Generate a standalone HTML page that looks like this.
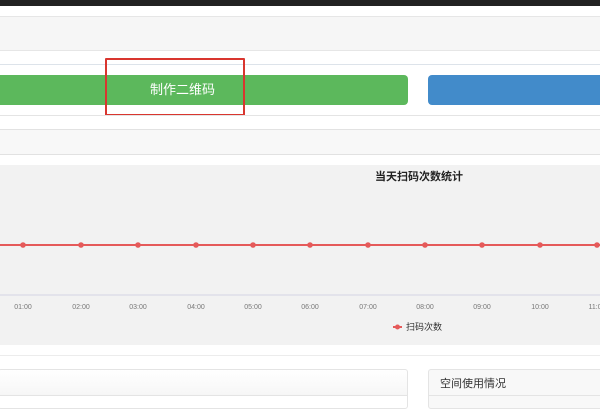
<!DOCTYPE html>
<html><head><meta charset="utf-8"><style>
*{margin:0;padding:0;box-sizing:border-box}
body{width:600px;height:400px;overflow:hidden;background:#fff;position:relative;font-family:"Liberation Sans","Noto Sans CJK SC",sans-serif}
.a{position:absolute}
</style></head><body>
<div class="a" style="left:0;top:0;width:600px;height:6px;background:#222"></div>
<div class="a" style="left:0;top:16px;width:600px;height:35px;background:#f6f6f6;border-top:1px solid #e6e6e6;border-bottom:1px solid #e6e6e6"></div>
<div class="a" style="left:0;top:64px;width:600px;height:1px;background:#dde3ea"></div>
<div class="a" style="left:-5px;top:75px;width:413px;height:30px;background:#5cb85c;border-radius:4px;color:#fff;font-size:13px;line-height:30px;padding-left:155px">制作二维码</div>
<div class="a" style="left:428px;top:75px;width:180px;height:30px;background:#428bca;border-radius:4px"></div>
<div class="a" style="left:105px;top:58px;width:140px;height:58px;border:2px solid #d9362f;border-radius:1px"></div>
<div class="a" style="left:0;top:115px;width:600px;height:1px;background:#e4e4e4"></div>
<div class="a" style="left:0;top:129px;width:600px;height:26px;background:#f8f8f8;border-top:1px solid #e2e2e2;border-bottom:1px solid #e2e2e2"></div>
<div class="a" style="left:0;top:165px;width:600px;height:180px;background:#f2f2f2"></div>
<svg class="a" style="left:0;top:165px" width="600" height="180">
<text x="375" y="15" font-size="11" font-weight="bold" fill="#222" font-family="Liberation Sans,Noto Sans CJK SC,sans-serif">当天扫码次数统计</text>
<line x1="0" y1="80" x2="600" y2="80" stroke="#e55a5a" stroke-width="2"/>
<g fill="#e55a5a">
<circle cx="23" cy="80" r="2.8"/><circle cx="81" cy="80" r="2.8"/><circle cx="138" cy="80" r="2.8"/><circle cx="196" cy="80" r="2.8"/><circle cx="253" cy="80" r="2.8"/><circle cx="310" cy="80" r="2.8"/><circle cx="368" cy="80" r="2.8"/><circle cx="425" cy="80" r="2.8"/><circle cx="482" cy="80" r="2.8"/><circle cx="540" cy="80" r="2.8"/><circle cx="597" cy="80" r="2.8"/>
</g>
<line x1="0" y1="130" x2="600" y2="130" stroke="#d4d4e4" stroke-width="1"/>
<g font-size="7" fill="#777" text-anchor="middle" font-family="Liberation Sans,sans-serif">
<text x="23" y="144">01:00</text><text x="81" y="144">02:00</text><text x="138" y="144">03:00</text><text x="196" y="144">04:00</text><text x="253" y="144">05:00</text><text x="310" y="144">06:00</text><text x="368" y="144">07:00</text><text x="425" y="144">08:00</text><text x="482" y="144">09:00</text><text x="540" y="144">10:00</text><text x="597" y="144">11:00</text>
</g>
<line x1="393" y1="162" x2="402" y2="162" stroke="#e55a5a" stroke-width="2"/><circle cx="397.5" cy="162" r="2.5" fill="#e55a5a"/>
<text x="406" y="165" font-size="9" fill="#333" font-family="Liberation Sans,Noto Sans CJK SC,sans-serif">扫码次数</text>
</svg>
<div class="a" style="left:0;top:355px;width:600px;height:1px;background:#ececec"></div>
<div class="a" style="left:-2px;top:369px;width:410px;height:40px;border:1px solid #e4e4e4;border-radius:3px;background:linear-gradient(#fff,#f6f6f6 26px,#fff 26px)"></div>
<div class="a" style="left:0;top:395px;width:408px;height:1px;background:#e4e4e4"></div>
<div class="a" style="left:428px;top:369px;width:180px;height:40px;border:1px solid #e4e4e4;border-radius:3px;background:#f8f8f8"></div>
<div class="a" style="left:428px;top:395px;width:172px;height:1px;background:#e4e4e4"></div>
<div class="a" style="left:440px;top:375px;font-size:11px;color:#333">空间使用情况</div>
</body></html>
